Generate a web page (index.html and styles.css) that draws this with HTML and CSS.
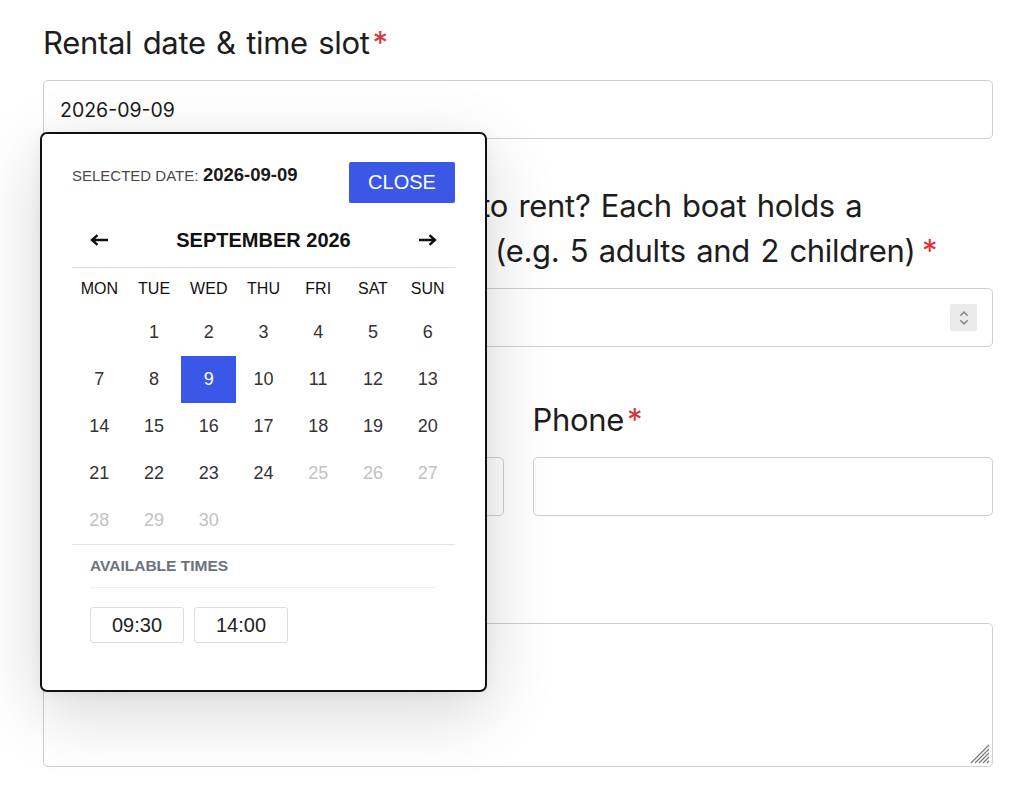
FILE: index.html
```html
<!DOCTYPE html>
<html lang="en">
<head>
<meta charset="utf-8">
<title>Boat rental booking</title>
<link rel="stylesheet" href="styles.css">
</head>
<body>
<form class="form">
  <div class="field field-date">
    <label class="label">Rental date &amp; time slot<span class="req">*</span></label>
    <div class="input"><span class="value">2026-09-09</span></div>

    <div class="picker">
      <div class="picker-head">
        <div class="selected"><span class="selected-label">SELECTED DATE:</span> <span class="selected-value">2026-09-09</span></div>
        <button class="close" type="button">CLOSE</button>
      </div>
      <div class="nav">
        <button class="arrow" type="button" aria-label="Previous month">
          <svg width="18" height="12" viewBox="0 0 18 12"><path d="M18 6H2.5M7.5 1.2L2 6l5.5 4.8" fill="none" stroke="#111" stroke-width="2.4"/></svg>
        </button>
        <div class="month">SEPTEMBER 2026</div>
        <button class="arrow" type="button" aria-label="Next month">
          <svg width="18" height="12" viewBox="0 0 18 12"><path d="M0 6h15.5M10.5 1.2L16 6l-5.5 4.8" fill="none" stroke="#111" stroke-width="2.4"/></svg>
        </button>
      </div>
      <div class="weekdays">
        <div>MON</div><div>TUE</div><div>WED</div><div>THU</div><div>FRI</div><div>SAT</div><div>SUN</div>
      </div>
      <div class="days">
        <div class="day empty"></div>
        <div class="day">1</div><div class="day">2</div><div class="day">3</div><div class="day">4</div><div class="day">5</div><div class="day">6</div>
        <div class="day">7</div><div class="day">8</div><div class="day selected-day">9</div><div class="day">10</div><div class="day">11</div><div class="day">12</div><div class="day">13</div>
        <div class="day">14</div><div class="day">15</div><div class="day">16</div><div class="day">17</div><div class="day">18</div><div class="day">19</div><div class="day">20</div>
        <div class="day">21</div><div class="day">22</div><div class="day">23</div><div class="day">24</div><div class="day off">25</div><div class="day off">26</div><div class="day off">27</div>
        <div class="day off">28</div><div class="day off">29</div><div class="day off">30</div>
      </div>
      <div class="times">
        <div class="times-title">AVAILABLE TIMES</div>
        <div class="slots">
          <button class="slot" type="button">09:30</button>
          <button class="slot" type="button">14:00</button>
        </div>
      </div>
    </div>
  </div>

  <div class="field">
    <label class="label">How many boats do you plan to rent? Each boat holds a<br>maximum of 7 persons in total (e.g. 5 adults and 2 children) <span class="req req-spaced">*</span></label>
    <div class="input input-number">
      <span class="spinner">
        <svg width="12" height="20" viewBox="0 0 12 20"><path d="M2.3 7.8L6 4.1l3.7 3.7M2.3 12.2L6 15.9l3.7-3.7" fill="none" stroke="#8a8a8a" stroke-width="1.5"/></svg>
      </span>
    </div>
  </div>

  <div class="row">
    <div class="field">
      <label class="label">Name<span class="req">*</span></label>
      <div class="input"></div>
    </div>
    <div class="field">
      <label class="label">Phone<span class="req">*</span></label>
      <div class="input"></div>
    </div>
  </div>

  <div class="field">
    <label class="label">Message</label>
    <div class="textarea">
      <svg class="grip" width="20" height="20" viewBox="0 0 20 20"><path d="M19 5L5 19M19 9L9 19M19 13L13 19M19 17L17 19M19 1L1 19" fill="none" stroke="#777" stroke-width="1.2"/></svg>
    </div>
  </div>
</form>
</body>
</html>
```

FILE: styles.css
```css
* { box-sizing: border-box; }

html, body {
  margin: 0;
  background: #fff;
}

body {
  font-family: "Inter", "Liberation Sans", sans-serif;
  color: #1a1a1a;
}

.form {
  width: 1024px;
  padding: 20px 31px 0 43px;
}

.field {
  position: relative;
  margin-bottom: 44px;
}

.label {
  display: block;
  font-size: 31px;
  line-height: 45px;
  letter-spacing: -0.01em;
  word-spacing: 2px;
  color: #1d1d1d;
  margin-bottom: 15px;
  white-space: nowrap;
}

.req {
  color: #d8343a;
  margin-left: 3px;
}

.req-spaced {
  margin-left: -4px;
}

.input {
  height: 59px;
  border: 1px solid #cfcfcf;
  border-radius: 5px;
  display: flex;
  align-items: center;
  padding: 0 16px;
  background: #fff;
}

.value {
  font-size: 19.5px;
  color: #1a1a1a;
}

.input-number {
  justify-content: flex-end;
  padding-right: 15px;
}

.spinner {
  width: 27px;
  height: 27px;
  background: #ebebeb;
  border-radius: 2px;
  display: flex;
  align-items: center;
  justify-content: center;
}

.row {
  display: grid;
  grid-template-columns: 1fr 1fr;
  column-gap: 29px;
  margin-top: 50px;
}

.row .field {
  margin-bottom: 47px;
}

.textarea {
  height: 144px;
  border: 1px solid #cfcfcf;
  border-radius: 5px;
  display: flex;
  align-items: flex-end;
  justify-content: flex-end;
  padding: 2px;
}

/* ---------- date picker ---------- */

.picker {
  position: absolute;
  z-index: 10;
  left: -3px;
  top: 112px;
  width: 447px;
  height: 560px;
  background: #fff;
  border: 2px solid #111;
  border-radius: 7px;
  padding: 28px 30px 0;
  box-shadow: 0 20px 70px rgba(0, 0, 0, 0.16), 0 2px 12px rgba(0, 0, 0, 0.05);
  font-family: "Liberation Sans", Arial, sans-serif;
}

.picker-head {
  display: flex;
  justify-content: space-between;
  align-items: flex-start;
  height: 41px;
}

.selected {
  margin-top: 2px;
  white-space: nowrap;
}

.selected-label {
  font-size: 15px;
  color: #4a4a4a;
}

.selected-value {
  font-size: 18.5px;
  font-weight: 700;
  color: #1a1a1a;
}

.close {
  width: 106px;
  height: 41px;
  border: 0;
  border-radius: 2px;
  background: #3b57e6;
  color: #fff;
  font-family: "Liberation Sans", Arial, sans-serif;
  font-size: 20px;
  padding: 0;
  cursor: pointer;
}

.nav {
  display: flex;
  align-items: center;
  justify-content: space-between;
  margin-top: 25px;
  height: 40px;
  padding: 0 18px 15px;
  border-bottom: 1px solid #dcdcdc;
}

.arrow {
  border: 0;
  background: none;
  padding: 0;
  width: 18px;
  height: 24px;
  display: flex;
  align-items: center;
  justify-content: center;
  cursor: pointer;
}

.month {
  font-size: 20px;
  font-weight: 700;
  line-height: 24px;
  color: #111;
}

.weekdays,
.days {
  display: grid;
  grid-template-columns: repeat(7, 1fr);
}

.weekdays div {
  height: 41px;
  display: flex;
  align-items: center;
  justify-content: center;
  font-size: 16px;
  color: #111;
}

.day {
  height: 47px;
  display: flex;
  align-items: center;
  justify-content: center;
  font-size: 18px;
  color: #333;
}

.day.off {
  color: #c2c2c2;
}

.day.selected-day {
  background: #3b57e8;
  color: #fff;
}

.times {
  border-top: 1px solid #e3e3e3;
  padding: 0 18px;
}

.times-title {
  font-size: 15.5px;
  font-weight: 700;
  line-height: 18px;
  color: #6b7280;
  padding: 12px 0;
  border-bottom: 1px solid #efefef;
}

.slots {
  display: flex;
  gap: 10px;
  margin-top: 19px;
}

.slot {
  width: 94px;
  height: 36px;
  border: 1px solid #dddddd;
  border-radius: 3px;
  background: #fff;
  font-family: "Liberation Sans", Arial, sans-serif;
  font-size: 20px;
  color: #222;
  padding: 0;
}
```
